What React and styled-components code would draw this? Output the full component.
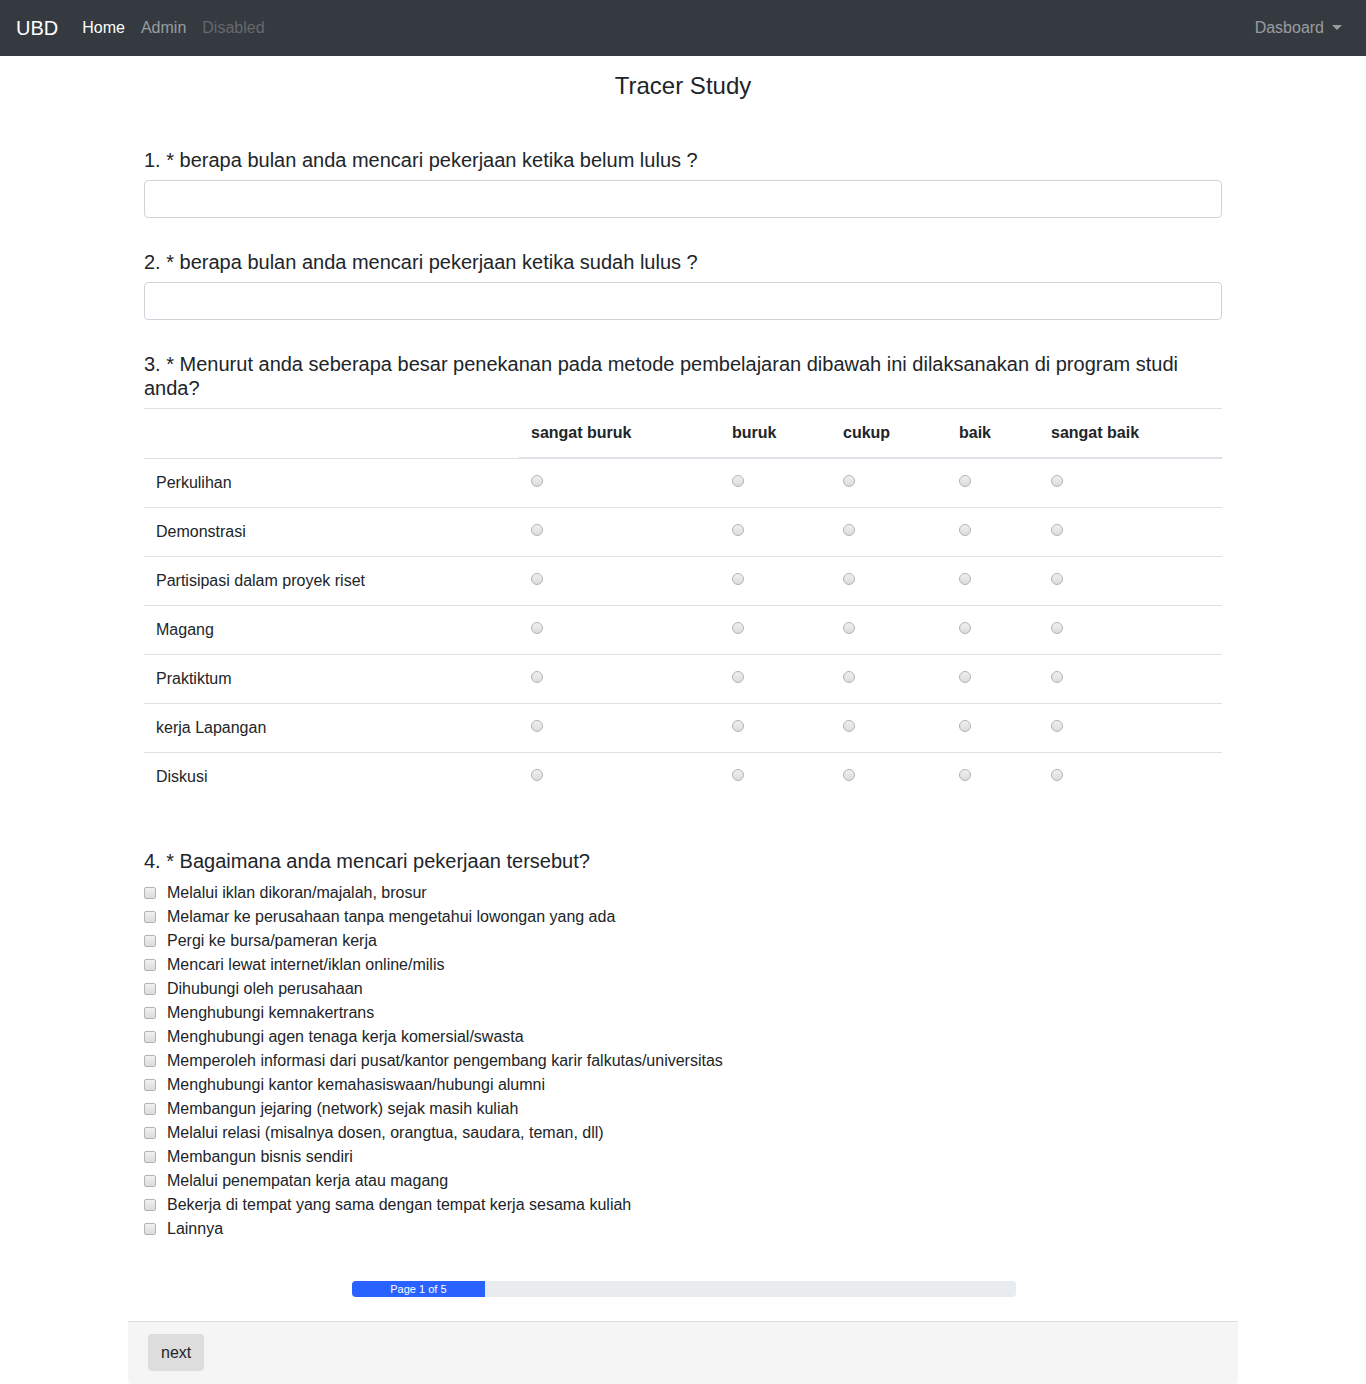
import React from "react";
import styled, { createGlobalStyle } from "styled-components";

const Global = createGlobalStyle`
  * { box-sizing: border-box; }
  body {
    margin: 0;
    font-family: "Liberation Sans", Arial, sans-serif;
    font-size: 16px;
    line-height: 1.5;
    color: #212529;
    background: #fff;
  }
`;

const Nav = styled.nav`
  height: 56px;
  background: #343a40;
  display: flex;
  align-items: center;
  padding: 0 16px;
`;
const Brand = styled.span`
  color: #fff;
  font-size: 20px;
  line-height: 30px;
  margin-right: 16px;
`;
const NavLink = styled.span`
  padding: 0 8px;
  color: ${(p) => (p.$state === "active" ? "#fff" : p.$state === "disabled" ? "rgba(255,255,255,.25)" : "rgba(255,255,255,.5)")};
  font-size: 16px;
`;
const Spacer = styled.div`
  flex: 1;
`;
const Dropdown = styled.span`
  color: rgba(255, 255, 255, 0.5);
  padding: 0 8px;
  display: flex;
  align-items: center;
  gap: 8px;
`;
const Caret = styled.span`
  width: 0;
  height: 0;
  border-left: 5px solid transparent;
  border-right: 5px solid transparent;
  border-top: 5px solid rgba(255, 255, 255, 0.5);
  margin-top: -2px;
`;

const Container = styled.div`
  width: 1110px;
  margin: 0 auto;
`;
const Title = styled.h3`
  margin: 15px 0 0;
  text-align: center;
  font-size: 24px;
  font-weight: 400;
  line-height: 29px;
`;
const Body = styled.div`
  padding: 48px 16px 0;
`;
const Question = styled.div`
  margin-bottom: ${(p) => p.$mb ?? 32}px;
`;
const QTitle = styled.h5`
  margin: 0 0 ${(p) => p.$mb ?? 8}px;
  font-size: 20px;
  font-weight: 400;
  line-height: 24px;
  color: #212529;
`;
const TextInput = styled.input`
  display: block;
  width: 100%;
  height: 38px;
  border: 1px solid #ced4da;
  border-radius: 4px;
  padding: 6px 12px;
  font-size: 16px;
  font-family: inherit;
`;

const Table = styled.table`
  width: 100%;
  border-collapse: collapse;
  table-layout: fixed;
  border-top: 1px solid #dee2e6;
`;
const Th = styled.th`
  text-align: left;
  font-weight: 700;
  padding: 12px;
  line-height: 24px;
  border-bottom: ${(p) => (p.$empty ? "none" : "2px solid #dee2e6")};
`;
const Td = styled.td`
  padding: 12px;
  line-height: 24px;
  height: 49px;
  border-top: 1px solid #dee2e6;
  vertical-align: top;
`;
const Radio = styled.span`
  display: block;
  width: 12px;
  height: 12px;
  border-radius: 50%;
  border: 1px solid #b4b4b4;
  background: linear-gradient(#f0f0f0, #dcdcdc);
  margin-top: 4px;
`;

const CheckRow = styled.label`
  display: flex;
  align-items: center;
  height: 24px;
  font-size: 16px;
  color: #212529;
`;
const CheckBox = styled.span`
  width: 12px;
  height: 12px;
  border: 1px solid #b4b4b4;
  border-radius: 2px;
  background: linear-gradient(#f0f0f0, #dcdcdc);
  margin-right: 11px;
  flex-shrink: 0;
`;

const ProgressWrap = styled.div`
  display: flex;
  justify-content: center;
  padding: 40px 0 24px;
`;
const Progress = styled.div`
  width: 664px;
  height: 16px;
  background: #e9ecef;
  border-radius: 4px;
  overflow: hidden;
  display: flex;
  margin-left: 2px;
`;
const ProgressBar = styled.div`
  background: #2962ff;
  color: #fff;
  font-size: 11px;
  line-height: 16px;
  text-align: center;
`;

const Footer = styled.div`
  background: #f5f5f5;
  border-top: 1px solid #dddddd;
  padding: 12px 20px 13px;
  border-radius: 0 0 4px 4px;
`;
const Button = styled.button`
  background: #dddddd;
  border: none;
  border-radius: 4px;
  height: 37px;
  padding: 0 13px;
  font-size: 16px;
  font-family: inherit;
  color: #212529;
`;

const cols = ["sangat buruk", "buruk", "cukup", "baik", "sangat baik"];
const widths = [375, 201, 111, 116, 92, 183];
const rows = ["Perkulihan", "Demonstrasi", "Partisipasi dalam proyek riset", "Magang", "Praktiktum", "kerja Lapangan", "Diskusi"];
const options = [
  "Melalui iklan dikoran/majalah, brosur",
  "Melamar ke perusahaan tanpa mengetahui lowongan yang ada",
  "Pergi ke bursa/pameran kerja",
  "Mencari lewat internet/iklan online/milis",
  "Dihubungi oleh perusahaan",
  "Menghubungi kemnakertrans",
  "Menghubungi agen tenaga kerja komersial/swasta",
  "Memperoleh informasi dari pusat/kantor pengembang karir falkutas/universitas",
  "Menghubungi kantor kemahasiswaan/hubungi alumni",
  "Membangun jejaring (network) sejak masih kuliah",
  "Melalui relasi (misalnya dosen, orangtua, saudara, teman, dll)",
  "Membangun bisnis sendiri",
  "Melalui penempatan kerja atau magang",
  "Bekerja di tempat yang sama dengan tempat kerja sesama kuliah",
  "Lainnya",
];

export default function App() {
  return (
    <>
      <Global />
      <Nav>
        <Brand>UBD</Brand>
        <NavLink $state="active">Home</NavLink>
        <NavLink>Admin</NavLink>
        <NavLink $state="disabled">Disabled</NavLink>
        <Spacer />
        <Dropdown>
          Dasboard <Caret />
        </Dropdown>
      </Nav>
      <Container>
        <Title>Tracer Study</Title>
        <Body>
          <Question>
            <QTitle>1. * berapa bulan anda mencari pekerjaan ketika belum lulus ?</QTitle>
            <TextInput type="text" />
          </Question>
          <Question>
            <QTitle>2. * berapa bulan anda mencari pekerjaan ketika sudah lulus ?</QTitle>
            <TextInput type="text" />
          </Question>
          <Question $mb={48}>
            <QTitle>3. * Menurut anda seberapa besar penekanan pada metode pembelajaran dibawah ini dilaksanakan di program studi anda?</QTitle>
            <Table>
              <colgroup>
                {widths.map((w, i) => (
                  <col key={i} style={{ width: w }} />
                ))}
              </colgroup>
              <thead>
                <tr>
                  <Th $empty />
                  {cols.map((c) => (
                    <Th key={c}>{c}</Th>
                  ))}
                </tr>
              </thead>
              <tbody>
                {rows.map((r) => (
                  <tr key={r}>
                    <Td>{r}</Td>
                    {cols.map((c) => (
                      <Td key={c}>
                        <Radio />
                      </Td>
                    ))}
                  </tr>
                ))}
              </tbody>
            </Table>
          </Question>
          <Question $mb={0}>
            <QTitle $mb={8}>4. * Bagaimana anda mencari pekerjaan tersebut?</QTitle>
            {options.map((o) => (
              <CheckRow key={o}>
                <CheckBox />
                {o}
              </CheckRow>
            ))}
          </Question>
        </Body>
        <ProgressWrap>
          <Progress>
            <ProgressBar style={{ width: "20%" }}>Page 1 of 5</ProgressBar>
          </Progress>
        </ProgressWrap>
        <Footer>
          <Button>next</Button>
        </Footer>
      </Container>
    </>
  );
}
